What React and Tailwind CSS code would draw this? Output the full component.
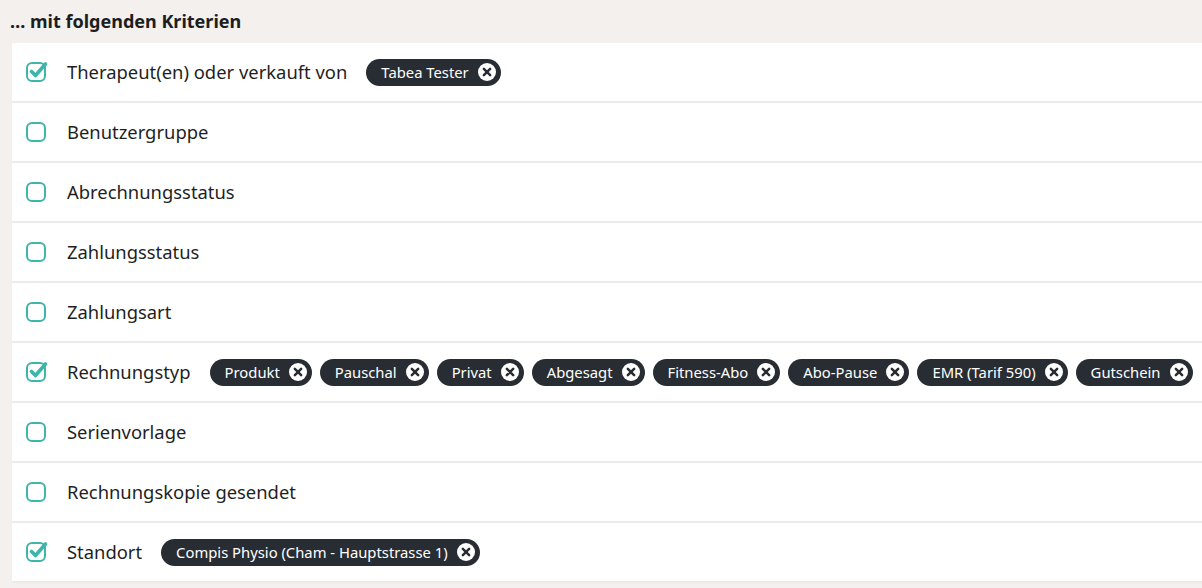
const rows = [
  { label: 'Therapeut(en) oder verkauft von', checked: true, chips: ['Tabea Tester'] },
  { label: 'Benutzergruppe' },
  { label: 'Abrechnungsstatus' },
  { label: 'Zahlungsstatus' },
  { label: 'Zahlungsart' },
  {
    label: 'Rechnungstyp',
    checked: true,
    chips: ['Produkt', 'Pauschal', 'Privat', 'Abgesagt', 'Fitness-Abo', 'Abo-Pause', 'EMR (Tarif 590)', 'Gutschein'],
  },
  { label: 'Serienvorlage' },
  { label: 'Rechnungskopie gesendet' },
  { label: 'Standort', checked: true, chips: ['Compis Physio (Cham - Hauptstrasse 1)'] },
];

function Checkbox({ checked }) {
  return (
    <svg width="24" height="24" viewBox="0 0 24 24" className="shrink-0" fill="none">
      <rect x="2" y="3" width="18" height="18" rx="5" stroke="#3db5ab" strokeWidth="2" />
      {checked && (
        <path d="M6.5 11.5 L10.5 15.5 L20.5 4" stroke="#3db5ab" strokeWidth="3.6" strokeLinecap="round" strokeLinejoin="round" />
      )}
    </svg>
  );
}

function Chip({ text }) {
  return (
    <span className="flex items-center gap-[9px] h-[27px] pl-[15px] pr-[5px] rounded-full bg-[#282d33] text-white text-[14.8px] whitespace-nowrap">
      {text}
      <svg width="18" height="18" viewBox="0 0 16 16">
        <circle cx="8" cy="8" r="8" fill="#fff" />
        <path d="M5.2 5.2 L10.8 10.8 M10.8 5.2 L5.2 10.8" stroke="#282d33" strokeWidth="2.2" strokeLinecap="round" />
      </svg>
    </span>
  );
}

export default function App() {
  return (
    <div className="w-[1202px] h-[588px] overflow-hidden bg-[#f3f0ed]" style={{ fontFamily: '"Noto Sans", "Open Sans", sans-serif' }}>
      <div className="h-[43px] flex items-center pl-[10px] text-[18px] font-bold text-[#1d1d1d]">… mit folgenden Kriterien</div>
      <div className="ml-[12px] bg-white">
        {rows.map((r) => (
          <div key={r.label} className="h-[60px] flex items-center pl-[13px] border-b-2 border-[#ebebeb]">
            <Checkbox checked={r.checked} />
            <span className="ml-[18px] text-[18.4px] text-[#1f1f1f] whitespace-nowrap">{r.label}</span>
            {r.chips && (
              <div className="ml-[19px] flex items-center gap-[8px]">
                {r.chips.map((c) => (
                  <Chip key={c} text={c} />
                ))}
              </div>
            )}
          </div>
        ))}
      </div>
    </div>
  );
}
